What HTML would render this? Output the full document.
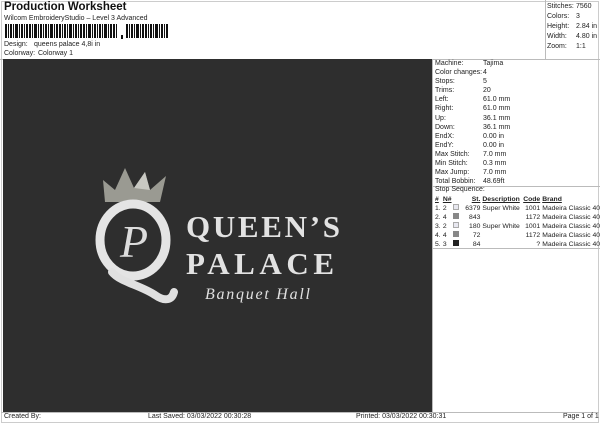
<!DOCTYPE html>
<html><head><style>
*{margin:0;padding:0;box-sizing:border-box}
body{width:600px;height:424px;background:#fff;font-family:"Liberation Sans",sans-serif;color:#222;position:relative;overflow:hidden;font-size:7px}
.a{position:absolute;white-space:nowrap}
.frame{position:absolute;border:1px solid #bbb}
table{border-collapse:collapse;font-size:6.8px}
td{padding:0;height:9.1px;line-height:9.1px}
</style></head><body>
<div class="frame" style="left:1px;top:1px;width:598px;height:422px;border-color:#ccc"></div>
<div class="a" style="left:4px;top:1px;font-size:11.5px;font-weight:bold;color:#111">Production Worksheet</div>
<div class="a" style="left:4px;top:15px;font-size:7px">Wilcom EmbroideryStudio – Level 3 Advanced</div>
<svg class="a" style="left:5px;top:24px" width="165" height="15">
<g fill="#111">
<rect x="0" y="0" width="2" height="14"/><rect x="3" y="0" width="1" height="14"/><rect x="5" y="0" width="2" height="14"/><rect x="8" y="0" width="1" height="14"/><rect x="10" y="0" width="3" height="14"/><rect x="14" y="0" width="1" height="14"/><rect x="16" y="0" width="2" height="14"/><rect x="19" y="0" width="1" height="14"/><rect x="21" y="0" width="2" height="14"/><rect x="24" y="0" width="2" height="14"/><rect x="27" y="0" width="1" height="14"/><rect x="29" y="0" width="3" height="14"/><rect x="33" y="0" width="1" height="14"/><rect x="35" y="0" width="2" height="14"/><rect x="38" y="0" width="1" height="14"/><rect x="40" y="0" width="2" height="14"/><rect x="43" y="0" width="1" height="14"/><rect x="45" y="0" width="3" height="14"/><rect x="49" y="0" width="1" height="14"/><rect x="51" y="0" width="2" height="14"/><rect x="54" y="0" width="2" height="14"/><rect x="57" y="0" width="1" height="14"/><rect x="59" y="0" width="2" height="14"/><rect x="62" y="0" width="1" height="14"/><rect x="64" y="0" width="3" height="14"/><rect x="68" y="0" width="1" height="14"/><rect x="70" y="0" width="2" height="14"/><rect x="73" y="0" width="1" height="14"/><rect x="75" y="0" width="2" height="14"/><rect x="78" y="0" width="2" height="14"/><rect x="81" y="0" width="1" height="14"/><rect x="83" y="0" width="3" height="14"/><rect x="87" y="0" width="1" height="14"/><rect x="89" y="0" width="2" height="14"/><rect x="92" y="0" width="1" height="14"/><rect x="94" y="0" width="2" height="14"/><rect x="97" y="0" width="1" height="14"/><rect x="99" y="0" width="3" height="14"/><rect x="103" y="0" width="1" height="14"/><rect x="105" y="0" width="2" height="14"/><rect x="108" y="0" width="2" height="14"/><rect x="111" y="0" width="1" height="14"/><rect x="116" y="11" width="2" height="4"/><rect x="121" y="0" width="2" height="14"/><rect x="124" y="0" width="1" height="14"/><rect x="126" y="0" width="2" height="14"/><rect x="129" y="0" width="1" height="14"/><rect x="131" y="0" width="3" height="14"/><rect x="135" y="0" width="1" height="14"/><rect x="137" y="0" width="2" height="14"/><rect x="140" y="0" width="2" height="14"/><rect x="143" y="0" width="1" height="14"/><rect x="145" y="0" width="2" height="14"/><rect x="148" y="0" width="1" height="14"/><rect x="150" y="0" width="3" height="14"/><rect x="154" y="0" width="1" height="14"/><rect x="156" y="0" width="2" height="14"/><rect x="159" y="0" width="1" height="14"/><rect x="161" y="0" width="2" height="14"/>
</g></svg>
<div class="a" style="left:4px;top:41px">Design:</div><div class="a" style="left:34px;top:41px">queens palace 4,8i in</div>
<div class="a" style="left:4px;top:50px">Colorway:</div><div class="a" style="left:38px;top:50px">Colorway 1</div>

<div class="a" style="left:545px;top:0;width:54px;height:59px;border-left:1px solid #bbb"></div>
<div class="a" style="left:547px;top:2px;line-height:10px">Stitches:<br>Colors:<br>Height:<br>Width:<br>Zoom:</div>
<div class="a" style="left:576px;top:2px;line-height:10px">7560<br>3<br>2.84 in<br>4.80 in<br>1:1</div>
<div class="a" style="left:0;top:59px;width:600px;border-top:1px solid #bbb"></div>

<div class="a" style="left:3px;top:59px;width:430px;height:353px;background:#2e2e2e"></div>
<svg class="a" style="left:90px;top:160px" width="260" height="150">
<polygon points="15,42 13,20 25,30 35,8 44,28 55,12 60,30 76,16 70,42" fill="#9a9a92"/>
<polygon points="44,28 55,12 60,30" fill="#c8c8c2"/>
<ellipse cx="43" cy="80" rx="33" ry="36" fill="none" stroke="#e4e4e4" stroke-width="9"/>
<path d="M22,112 C30,122 50,125 65,135 C75,142 82,140 84,132" fill="none" stroke="#e0e0e0" stroke-width="8" stroke-linecap="round"/>
<text x="44" y="97" font-family="Liberation Serif,serif" font-style="italic" font-size="46" fill="#dcdcdc" text-anchor="middle">P</text>
<text x="96" y="77" font-family="Liberation Serif,serif" font-weight="bold" font-size="31" fill="#e2e2e2" textLength="154">QUEEN’S</text>
<text x="96" y="114" font-family="Liberation Serif,serif" font-weight="bold" font-size="31" fill="#e2e2e2" textLength="148">PALACE</text>
<text x="115" y="139" font-family="Liberation Serif,serif" font-style="italic" font-size="16" fill="#e0e0e0" textLength="105">Banquet Hall</text>
</svg>

<div class="a" style="left:432px;top:59px;height:353px;border-left:1px solid #bbb"></div>
<div class="a" style="left:435px;top:59px;line-height:9.1px">Machine:<br>Color changes:<br>Stops:<br>Trims:<br>Left:<br>Right:<br>Up:<br>Down:<br>EndX:<br>EndY:<br>Max Stitch:<br>Min Stitch:<br>Max Jump:<br>Total Bobbin:</div>
<div class="a" style="left:483px;top:59px;line-height:9.1px">Tajima<br>4<br>5<br>20<br>61.0 mm<br>61.0 mm<br>36.1 mm<br>36.1 mm<br>0.00 in<br>0.00 in<br>7.0 mm<br>0.3 mm<br>7.0 mm<br>48.69ft</div>
<div class="a" style="left:432px;top:186px;width:168px;border-top:1px solid #bbb"></div>
<div class="a" style="left:435px;top:186px">Stop Sequence:</div>
<table class="a" style="left:435px;top:195px">
<tr style="font-weight:bold;text-decoration:underline"><td style="width:8px">#</td><td style="width:17px">N#</td><td style="width:21px;text-align:right">St.</td><td style="width:41px;padding-left:2px">Description</td><td style="width:19px;text-align:right">Code</td><td style="padding-left:2px">Brand</td></tr>
<tr><td>1.</td><td>2 <span style="display:inline-block;width:6px;height:6px;background:#e8e8f0;border:1px solid #aaa;margin-left:4px"></span></td><td style="text-align:right">6379</td><td style="padding-left:2px">Super White</td><td style="text-align:right">1001</td><td style="padding-left:2px">Madeira Classic 40</td></tr>
<tr><td>2.</td><td>4 <span style="display:inline-block;width:6px;height:6px;background:#888;margin-left:4px"></span></td><td style="text-align:right">843</td><td></td><td style="text-align:right">1172</td><td style="padding-left:2px">Madeira Classic 40</td></tr>
<tr><td>3.</td><td>2 <span style="display:inline-block;width:6px;height:6px;background:#e8e8f0;border:1px solid #aaa;margin-left:4px"></span></td><td style="text-align:right">180</td><td style="padding-left:2px">Super White</td><td style="text-align:right">1001</td><td style="padding-left:2px">Madeira Classic 40</td></tr>
<tr><td>4.</td><td>4 <span style="display:inline-block;width:6px;height:6px;background:#888;margin-left:4px"></span></td><td style="text-align:right">72</td><td></td><td style="text-align:right">1172</td><td style="padding-left:2px">Madeira Classic 40</td></tr>
<tr><td>5.</td><td>3 <span style="display:inline-block;width:6px;height:6px;background:#222;margin-left:4px"></span></td><td style="text-align:right">84</td><td></td><td style="text-align:right">?</td><td style="padding-left:2px">Madeira Classic 40</td></tr>
</table>
<div class="a" style="left:432px;top:248px;width:168px;border-top:1px solid #bbb"></div>

<div class="a" style="left:1px;top:412px;width:598px;border-top:1px solid #bbb"></div>
<div class="a" style="left:4px;top:413px">Created By:</div>
<div class="a" style="left:148px;top:413px">Last Saved: 03/03/2022 00:30:28</div>
<div class="a" style="left:356px;top:413px">Printed: 03/03/2022 00:30:31</div>
<div class="a" style="left:563px;top:413px">Page 1 of 1</div>
</body></html>
